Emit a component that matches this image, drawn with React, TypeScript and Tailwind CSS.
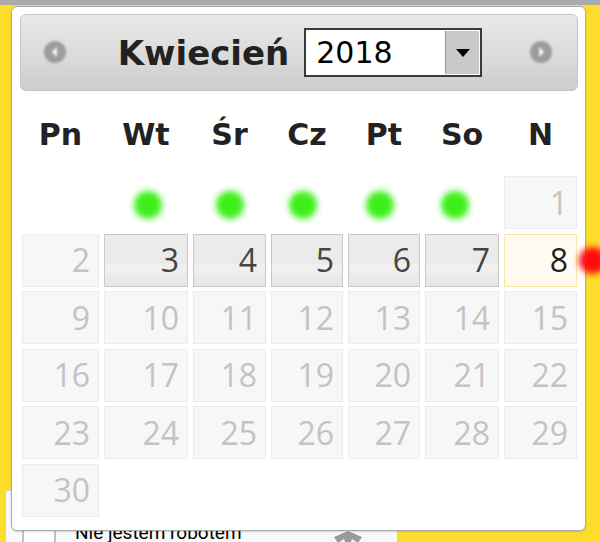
import React from "react";

const cols = "grid grid-cols-[77px_84px_73px_72px_72px_74px_73px] gap-x-[5px]";

type Cell = { n?: number; kind: "empty" | "off" | "on" | "today"; dot?: string };

const dotShift: Record<string, string> = {
  a: "translate-x-[2px]",
  b: "translate-x-[0px]",
  c: "-translate-x-[4px]",
  d: "-translate-x-[4px]",
  e: "-translate-x-[7px]",
};

const rows: Cell[][] = [
  [
    { kind: "empty" },
    { kind: "empty", dot: "a" },
    { kind: "empty", dot: "b" },
    { kind: "empty", dot: "c" },
    { kind: "empty", dot: "d" },
    { kind: "empty", dot: "e" },
    { kind: "off", n: 1 },
  ],
  [
    { kind: "off", n: 2 },
    { kind: "on", n: 3 },
    { kind: "on", n: 4 },
    { kind: "on", n: 5 },
    { kind: "on", n: 6 },
    { kind: "on", n: 7 },
    { kind: "today", n: 8 },
  ],
  [9, 10, 11, 12, 13, 14, 15].map((n) => ({ kind: "off" as const, n })),
  [16, 17, 18, 19, 20, 21, 22].map((n) => ({ kind: "off" as const, n })),
  [23, 24, 25, 26, 27, 28, 29].map((n) => ({ kind: "off" as const, n })),
  [{ kind: "off", n: 30 }, { kind: "empty" }, { kind: "empty" }, { kind: "empty" }, { kind: "empty" }, { kind: "empty" }, { kind: "empty" }],
];

function DayCell({ c }: { c: Cell }) {
  if (c.kind === "empty") {
    return (
      <div className="flex items-center justify-center">
        {c.dot && (
          <div
            className={`w-[28px] h-[28px] rounded-full bg-[#3def1a] blur-[3px] mt-[5px] ${dotShift[c.dot]}`}
          />
        )}
      </div>
    );
  }
  const base =
    "flex items-center justify-end pr-[8px] border font-['Open_Sans',sans-serif] text-[32px] leading-none";
  const styles =
    c.kind === "off"
      ? "bg-[#f7f7f7] border-[#ececec] text-[#c3c3c3]"
      : c.kind === "on"
      ? "bg-[linear-gradient(to_bottom,#ececec_0%,#eaeaea_55%,#f1f1f1_60%,#e6e6e6_100%)] border-[#c9c9c9] text-[#454545]"
      : "bg-[#fffbf1] border-[#f7e6a6] text-[#222222]";
  return <div className={`${base} ${styles}`}>{c.n}</div>;
}

function NavCircle({ dir }: { dir: "prev" | "next" }) {
  return (
    <svg width="24" height="24" viewBox="0 0 24 24" className="blur-[1px]">
      <circle cx="12" cy="12" r="11" fill="#9c9c9c" />
      {dir === "prev" ? (
        <path d="M14 7 L8.5 12 L14 17 Z" fill="#f4f4f4" />
      ) : (
        <path d="M10 7 L15.5 12 L10 17 Z" fill="#f4f4f4" />
      )}
    </svg>
  );
}

export default function App() {
  const days = ["Pn", "Wt", "Śr", "Cz", "Pt", "So", "N"];
  return (
    <div className="relative w-[600px] h-[542px] overflow-hidden bg-[#fddd2b]">
      <div className="h-[5px] bg-[#ababab]" />
      {/* recaptcha box beneath */}
      <div className="ml-[5px] mt-[485px] w-[393px] h-[80px] bg-[#f9f9f9] border border-[#d3d3d3] rounded-[3px] flex items-start pt-[28px] pl-[16px]">
        <div className="w-[34px] h-[34px] bg-white border-2 border-[#c1c1c1] rounded-[2px]" />
        <div className="ml-[19px] mt-[4px] font-['Roboto',sans-serif] text-[19px] text-black leading-none">
          Nie jestem robotem
        </div>
        <svg width="36" height="30" viewBox="0 0 36 30" className="ml-[88px] mt-[10px]">
          <path d="M4 8 L18 2 L32 8 L28 14 L22 10 L18 22 L14 10 L8 14 Z" fill="#9b9b9b" />
        </svg>
      </div>

      {/* datepicker popup */}
      <div className="absolute left-[11px] top-[6px] w-[575px] h-[525px] bg-white border border-[#aaaaaa] rounded-[6px] pl-[8px] pr-[6px] pt-[7px] shadow-[0_1px_2px_rgba(0,0,0,0.15)]">
        <div className="relative w-[558px] h-[77px] rounded-[6px] border border-[#c4c4c4] bg-[linear-gradient(to_bottom,#e9e9e9,#d9d9d9_60%,#cdcdcd)] flex items-center justify-center">
          <div className="absolute left-[22px] top-[25px]">
            <NavCircle dir="prev" />
          </div>
          <div className="absolute right-[24px] top-[25px]">
            <NavCircle dir="next" />
          </div>
          <div className="flex items-center gap-[15px] ml-[2px]">
            <span className="font-['DejaVu_Sans',sans-serif] font-bold text-[34px] leading-none text-[#222222]">
              Kwiecień
            </span>
            <div className="relative w-[178px] h-[49px] border-2 border-[#3a3a3a] bg-white flex items-center">
              <span className="pl-[10px] font-['DejaVu_Sans',sans-serif] text-[30px] leading-none text-black">
                2018
              </span>
              <div className="absolute right-[1px] top-[1px] bottom-[1px] w-[34px] bg-[#c9c9c9] border-l border-[#9a9a9a] flex items-center justify-center">
                <svg width="14" height="8" viewBox="0 0 14 8">
                  <path d="M0 0 L14 0 L7 8 Z" fill="#000" />
                </svg>
              </div>
            </div>
          </div>
        </div>

        <div className={`${cols} ml-[2px] h-[85px] items-center pt-[3px]`}>
          {days.map((d) => (
            <div
              key={d}
              className="text-center font-['DejaVu_Sans',sans-serif] font-bold text-[30px] leading-none text-[#222222]"
            >
              {d}
            </div>
          ))}
        </div>

        <div className={`${cols} ml-[2px] auto-rows-[53px] gap-y-[4.5px]`}>
          {rows.flat().map((c, i) => (
            <DayCell key={i} c={c} />
          ))}
        </div>
      </div>

      {/* red marker */}
      <div className="absolute left-[579px] top-[247px] w-[27px] h-[27px] rounded-full bg-[#ff0d0d] blur-[3px]" />
    </div>
  );
}
